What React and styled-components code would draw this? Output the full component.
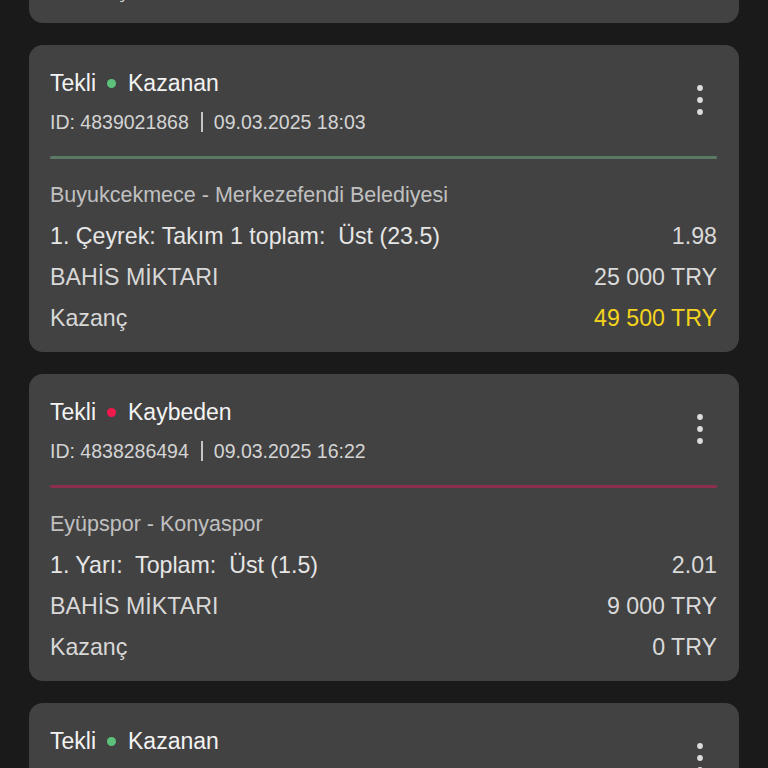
import React from "react";
import styled, { createGlobalStyle } from "styled-components";

const GlobalStyle = createGlobalStyle`
  html, body {
    margin: 0;
    padding: 0;
    background: #1a1a1a;
  }
  body {
    font-family: "Liberation Sans", Arial, Helvetica, sans-serif;
    overflow: hidden;
  }
`;

const Page = styled.div`
  height: 768px;
  overflow: hidden;
  background: #1a1a1a;
`;

const List = styled.div`
  display: flex;
  flex-direction: column;
  gap: 22px;
  padding: 0 29px;
  margin-top: -284px;
`;

const Card = styled.div`
  background: #424242;
  border-radius: 14px;
  height: 307px;
  box-sizing: border-box;
  padding: 24px 22px 20px 21px;
  display: flex;
  flex-direction: column;
`;

const Header = styled.div`
  display: flex;
  justify-content: space-between;
  align-items: flex-start;
`;

const HeadText = styled.div`
  display: flex;
  flex-direction: column;
`;

const Title = styled.div`
  display: flex;
  align-items: center;
  font-size: 23px;
  line-height: 28px;
  color: #f3f3f3;
`;

const StatusDot = styled.span`
  width: 9px;
  height: 9px;
  border-radius: 50%;
  background: ${(p) => (p.$won ? "#5cc27b" : "#f0184c")};
  margin: 0 12px 0 11px;
`;

const Meta = styled.div`
  display: flex;
  align-items: center;
  margin-top: 13px;
  font-size: 19.5px;
  line-height: 24px;
  color: #d4d4d4;
`;

const Sep = styled.span`
  width: 2px;
  height: 20px;
  background: #c4c4c4;
  margin: 0 11px 0 12px;
`;

const Kebab = styled.svg`
  margin-top: 13px;
  margin-right: 11px;
  flex: none;
`;

const Divider = styled.div`
  height: 3px;
  border-radius: 2px;
  margin-top: 22px;
  background: ${(p) => (p.$won ? "#5a7a64" : "#8c2e4e")};
`;

const Match = styled.div`
  margin-top: 24px;
  font-size: 21.5px;
  line-height: 24px;
  color: #c0c0c0;
`;

const Rows = styled.div`
  display: flex;
  flex-direction: column;
  gap: 13px;
  margin-top: 15px;
`;

const Row = styled.div`
  display: flex;
  justify-content: space-between;
  align-items: center;
  font-size: 23.2px;
  line-height: 28px;
  color: ${(p) => (p.$muted ? "#d8d8d8" : "#e6e6e6")};
  white-space: pre;
`;

const Value = styled.span`
  color: ${(p) => (p.$highlight ? "#f4d41c" : "#dadada")};
`;

const KebabIcon = () => (
  <Kebab width="12" height="36" viewBox="0 0 12 36">
    <circle cx="6" cy="6" r="2.9" fill="#dcdcdc" />
    <circle cx="6" cy="18" r="2.9" fill="#dcdcdc" />
    <circle cx="6" cy="30" r="2.9" fill="#dcdcdc" />
  </Kebab>
);

const bets = [
  {
    won: true,
    id: "4839105532",
    date: "09.03.2025 19:40",
    match: "Galatasaray - Fenerbahce",
    market: "Maç Sonucu:  1",
    odds: "2.10",
    stake: "10 000 TRY",
    win: "21 000 TRY",
  },
  {
    won: true,
    id: "4839021868",
    date: "09.03.2025 18:03",
    match: "Buyukcekmece - Merkezefendi Belediyesi",
    market: "1. Çeyrek: Takım 1 toplam:  Üst (23.5)",
    odds: "1.98",
    stake: "25 000 TRY",
    win: "49 500 TRY",
  },
  {
    won: false,
    id: "4838286494",
    date: "09.03.2025 16:22",
    match: "Eyüpspor - Konyaspor",
    market: "1. Yarı:  Toplam:  Üst (1.5)",
    odds: "2.01",
    stake: "9 000 TRY",
    win: "0 TRY",
  },
  {
    won: true,
    id: "4837990127",
    date: "09.03.2025 14:05",
    match: "Anadolu Efes - Fenerbahce Beko",
    market: "Maç Sonucu:  1",
    odds: "1.75",
    stake: "12 000 TRY",
    win: "21 000 TRY",
  },
];

const BetCard = ({ bet }) => (
  <Card>
    <Header>
      <HeadText>
        <Title>
          Tekli
          <StatusDot $won={bet.won} />
          {bet.won ? "Kazanan" : "Kaybeden"}
        </Title>
        <Meta>
          ID: {bet.id}
          <Sep />
          {bet.date}
        </Meta>
      </HeadText>
      <KebabIcon />
    </Header>
    <Divider $won={bet.won} />
    <Match>{bet.match}</Match>
    <Rows>
      <Row>
        <span>{bet.market}</span>
        <Value>{bet.odds}</Value>
      </Row>
      <Row $muted>
        <span>BAHİS MİKTARI</span>
        <Value>{bet.stake}</Value>
      </Row>
      <Row $muted>
        <span>Kazanç</span>
        <Value $highlight={bet.won}>{bet.win}</Value>
      </Row>
    </Rows>
  </Card>
);

export default function App() {
  return (
    <Page>
      <GlobalStyle />
      <List>
        {bets.map((b) => (
          <BetCard key={b.id} bet={b} />
        ))}
      </List>
    </Page>
  );
}
